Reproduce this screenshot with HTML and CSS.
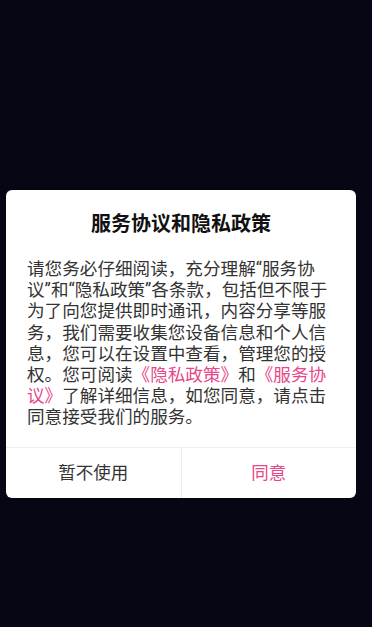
FILE: index.html
```html
<!DOCTYPE html>
<html lang="zh-CN">
<head>
<meta charset="utf-8">
<title>服务协议和隐私政策</title>
<link rel="stylesheet" href="styles.css">
</head>
<body>
<div class="screen">
  <div class="dialog">
    <h1 class="title">服务协议和隐私政策</h1>
    <p class="body">请您务必仔细阅读，充分理解“服务协议”和“隐私政策”各条款，包括但不限于为了向您提供即时通讯，内容分享等服务，我们需要收集您设备信息和个人信息，您可以在设置中查看，管理您的授权。您可阅读<span class="link">《隐私政策》</span>和<span class="link">《服务协议》</span>了解详细信息，如您同意，请点击同意接受我们的服务。</p>
    <div class="actions">
      <button class="btn btn-cancel">暂不使用</button>
      <button class="btn btn-ok">同意</button>
    </div>
  </div>
</div>
</body>
</html>
```

FILE: styles.css
```css
html, body {
  margin: 0;
  padding: 0;
  background: #070614;
  height: 100%;
}
.screen {
  padding: 190px 16px 0 6px;
  font-family: "Roboto", "Noto Sans CJK SC", sans-serif;
}
.dialog {
  width: 350px;
  background: #ffffff;
  border-radius: 6px;
  overflow: hidden;
  display: flex;
  flex-direction: column;
}
.title {
  margin: 0;
  padding: 20px 0 0;
  font-size: 20px;
  line-height: 28px;
  font-weight: bold;
  color: #111111;
  text-align: center;
}
.body {
  margin: 0;
  padding: 21px 0 18px 21px;
  width: 302px;
  font-size: 17.6px;
  line-height: 21.2px;
  color: #333333;
  text-spacing-trim: space-all;
}
.link {
  color: #e8478b;
}
.actions {
  display: flex;
  border-top: 1px solid #eeeeee;
  height: 50px;
}
.btn {
  flex: 1;
  margin: 0;
  padding: 0;
  border: none;
  background: transparent;
  font-family: "Roboto", "Noto Sans CJK SC", sans-serif;
  font-size: 17.5px;
  line-height: 50px;
  color: #333333;
}
.btn-cancel {
  border-right: 1px solid #eeeeee;
}
.btn-ok {
  color: #e8478b;
}
```
